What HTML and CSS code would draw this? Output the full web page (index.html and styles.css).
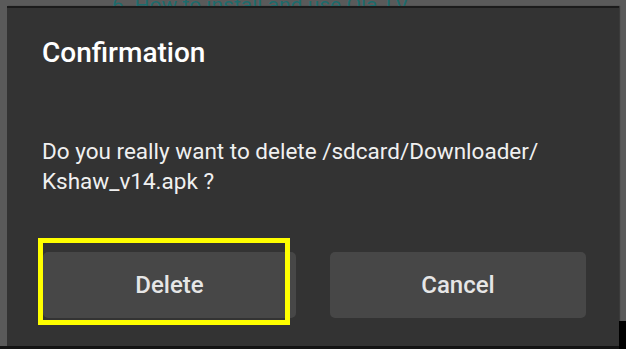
FILE: index.html
```html
<!DOCTYPE html>
<html lang="en">
<head>
    <meta charset="UTF-8">
    <meta name="viewport" content="width=device-width, initial-scale=1.0">
    <title>Confirmation</title>
    <link rel="stylesheet" href="styles.css">
</head>
<body>
    <div class="behind">
        <a class="behind-link">6. How to install and use Ola TV</a>
    </div>

    <div class="dialog">
        <h2 class="dialog-title">Confirmation</h2>
        <p class="dialog-msg">Do you really want to delete /sdcard/Downloader/<br>Kshaw_v14.apk ?</p>
        <div class="dialog-actions">
            <div class="btn-wrap">
                <button class="btn">Delete</button>
                <div class="focus-mark"></div>
            </div>
            <div class="btn-wrap">
                <button class="btn">Cancel</button>
            </div>
        </div>
    </div>
</body>
</html>
```

FILE: styles.css
```css
html, body {
    width: 626px;
    height: 349px;
    overflow: hidden;
}
body {
    margin: 0;
    font-family: Roboto, "Noto Sans", sans-serif;
    background:
        linear-gradient(#000, #000) right bottom / 7px 28px no-repeat,
        linear-gradient(#141414, #141414) left bottom / 100% 3px no-repeat,
        #5a5a5a;
}
.behind {
    height: 6px;
    overflow: hidden;
    padding-left: 112px;
}
.behind-link {
    display: block;
    margin-top: -6px;
    font-size: 21px;
    line-height: 22px;
    color: #1d6b6c;
    text-decoration: underline;
}
.dialog {
    width: 612px;
    height: 338px;
    margin-left: 7px;
    background-color: #333333;
    border-top: 2px solid #1b1b1b;
    box-shadow: 1px 0 1px rgba(0, 0, 0, 0.35);
}
.dialog-title {
    margin: 0;
    padding: 28px 0 0 35px;
    font-size: 28px;
    line-height: 34px;
    font-weight: 500;
    color: #ffffff;
}
.dialog-msg {
    margin: 66px 0 0;
    padding-left: 35px;
    font-size: 22.5px;
    line-height: 30px;
    color: #f0f0f0;
}
.dialog-actions {
    display: grid;
    grid-template-columns: 253px 256px;
    gap: 34px;
    margin-top: 56px;
    padding-left: 36px;
}
.btn-wrap {
    position: relative;
}
.btn {
    display: block;
    width: 100%;
    height: 66px;
    border: none;
    border-radius: 5px;
    background-color: #474747;
    color: #e6e6e6;
    font-family: Roboto, "Noto Sans", sans-serif;
    font-size: 24px;
    font-weight: 500;
    padding: 0;
}
.focus-mark {
    position: absolute;
    left: -5px;
    top: -14px;
    width: 242px;
    height: 77px;
    border: 5px solid #ffff00;
}
```
